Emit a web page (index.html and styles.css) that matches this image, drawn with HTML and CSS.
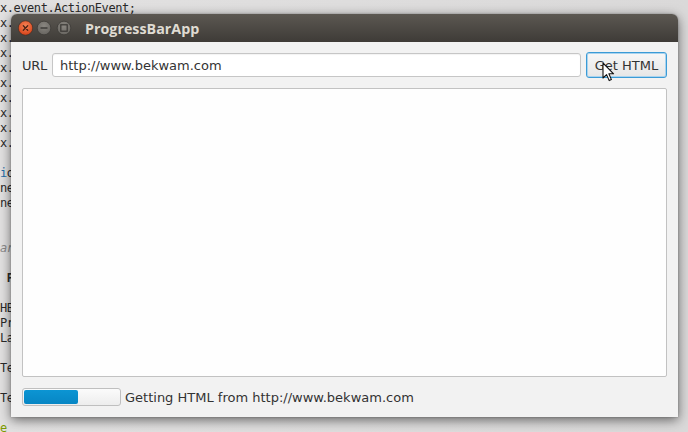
FILE: index.html
```html
<!DOCTYPE html>
<html>
<head>
<meta charset="utf-8">
<link rel="stylesheet" href="styles.css">
</head>
<body>
<div class="desktop">
<pre class="code"><span>x.event.ActionEvent;</span>
x.
x.
x.
x.
x.
x.
x.
x.
x.

<span class="kw">i</span>o
ne
ne


<span class="cm">ar</span>

 <b>P</b>

HB
Pr
La

Te

Te

<span class="str">e</span></pre>
  <div class="window">
    <div class="titlebar">
      <svg class="wbtns" width="54" height="16" viewBox="0 0 54 16">
        <defs>
          <radialGradient id="rc" cx="50%" cy="35%" r="60%">
            <stop offset="0" stop-color="#f48457"/>
            <stop offset="1" stop-color="#d9471d"/>
          </radialGradient>
          <radialGradient id="rg" cx="50%" cy="35%" r="60%">
            <stop offset="0" stop-color="#8a8781"/>
            <stop offset="1" stop-color="#6a6762"/>
          </radialGradient>
        </defs>
        <circle cx="7.5" cy="8" r="7.2" fill="url(#rc)" stroke="#3a2a22" stroke-width="0.6"/>
        <path d="M5.3 5.8 L9.7 10.2 M9.7 5.8 L5.3 10.2" stroke="#4a2416" stroke-width="1.3" stroke-linecap="round"/>
        <circle cx="26" cy="8" r="6.8" fill="url(#rg)" stroke="#34322f" stroke-width="0.6"/>
        <path d="M22.5 8 H29.5" stroke="#3a3835" stroke-width="1.4"/>
        <circle cx="46" cy="8" r="6.8" fill="url(#rg)" stroke="#34322f" stroke-width="0.6"/>
        <rect x="42.8" y="4.8" width="6.4" height="6.4" fill="none" stroke="#3a3835" stroke-width="1.2"/>
      </svg>
      <span class="title">ProgressBarApp</span>
    </div>
    <div class="content">
      <div class="url-row">
        <span class="label">URL</span>
        <div class="field">http://www.bekwam.com</div>
        <div class="btn">Get HTML</div>
      </div>
      <div class="textarea"></div>
      <div class="status-row">
        <div class="progress"><div class="fill" style="width:54px"></div></div>
        <span class="status">Getting HTML from http://www.bekwam.com</span>
      </div>
    </div>
    <svg class="cursor" width="13" height="21" viewBox="0 0 13 21">
      <path d="M1 1 L1 16 L4.6 12.6 L7.2 18.6 L9.4 17.6 L6.9 11.8 L11.6 11.8 Z" fill="#ffffff" stroke="#111" stroke-width="1.1" stroke-linejoin="round"/>
    </svg>
  </div>
</div>
</body>
</html>
```

FILE: styles.css
```css
html, body {
  margin: 0;
  padding: 0;
}
body {
  width: 688px;
  height: 432px;
  overflow: hidden;
}
.desktop {
  position: relative;
  width: 688px;
  height: 432px;
  overflow: hidden;
  background: linear-gradient(90deg, #e2e1e1 0%, #dad9d9 100%);
}
.code {
  margin: 0;
  padding: 1px 0 0 0;
  font-family: "DejaVu Sans Mono", monospace;
  font-size: 12px;
  letter-spacing: -0.45px;
  line-height: 15px;
  color: #2a2a2a;
}
.code .kw { color: #1f6fa8; }
.code .cm { color: #8a8a8a; font-style: italic; }
.code .str { color: #7d9a00; }
.window {
  position: absolute;
  left: 11px;
  top: 14px;
  width: 667px;
  height: 403px;
  border-radius: 6px 6px 0 0;
  box-shadow: 0 3px 12px rgba(0, 0, 0, 0.55), 0 0 2px rgba(0, 0, 0, 0.3);
  display: flex;
  flex-direction: column;
}
.titlebar {
  height: 28px;
  flex: none;
  display: flex;
  align-items: center;
  padding-left: 7px;
  border-radius: 6px 6px 0 0;
  background: linear-gradient(#5c5852, #3e3b37);
}
.wbtns {
  display: block;
}
.title {
  margin-left: 13px;
  font-family: "Open Sans", "DejaVu Sans", sans-serif;
  font-weight: 700;
  font-size: 14.3px;
  color: #dfdbd2;
}
.content {
  flex: 1;
  display: flex;
  flex-direction: column;
  padding: 10px 11px 11px;
  background: #f2f2f2;
  font-family: "DejaVu Sans", sans-serif;
  font-size: 13px;
  color: #333333;
}
.url-row {
  display: flex;
  align-items: center;
  height: 26px;
  flex: none;
}
.label {
  width: 30px;
  flex: none;
  letter-spacing: -0.3px;
}
.field {
  flex: 1;
  height: 24px;
  box-sizing: border-box;
  border: 1px solid #c6c6c6;
  border-radius: 3px;
  background: #ffffff;
  padding-left: 7px;
  display: flex;
  align-items: center;
  box-shadow: inset 0 1px 1px rgba(0,0,0,0.05);
}
.btn {
  margin-left: 5px;
  width: 81px;
  height: 26px;
  flex: none;
  box-sizing: border-box;
  border: 1px solid #3b9bd6;
  border-radius: 3px;
  background: linear-gradient(#f7f7f7, #e6e6e6);
  box-shadow: inset 0 0 0 1px #a9d3ee;
  display: flex;
  align-items: center;
  justify-content: center;
}
.textarea {
  flex: 1;
  margin-top: 10px;
  border: 1px solid #c2c2c2;
  border-radius: 2px;
  background: #fefefe;
}
.status-row {
  margin-top: 11px;
  height: 18px;
  flex: none;
  display: flex;
  align-items: center;
}
.progress {
  width: 99px;
  height: 18px;
  flex: none;
  box-sizing: border-box;
  border: 1px solid #bfbfbf;
  border-radius: 3px;
  background: linear-gradient(#fbfbfb, #ededed);
  padding: 1px;
}
.fill {
  height: 14px;
  border-radius: 2px;
  background: linear-gradient(#0c95d3, #0786c4);
}
.status {
  margin-left: 4px;
}
.cursor {
  position: absolute;
  left: 591px;
  top: 48px;
}
```
